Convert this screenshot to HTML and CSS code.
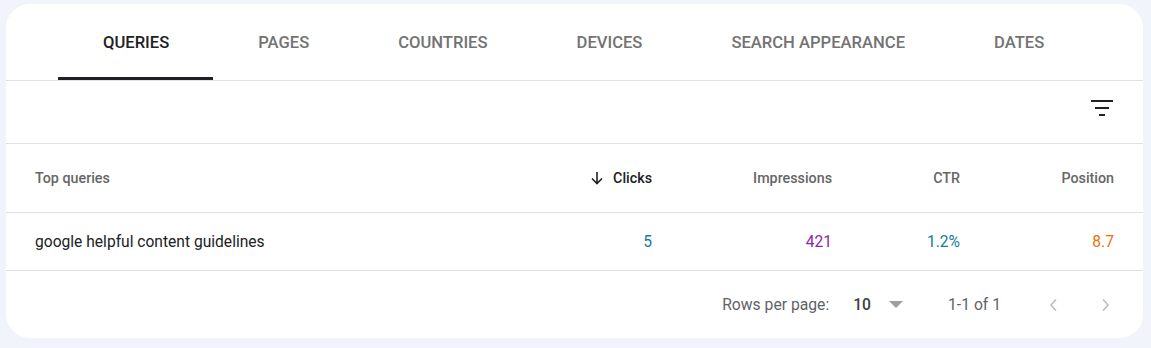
FILE: index.html
```html
<!DOCTYPE html>
<html>
<head>
<meta charset="utf-8">
<link rel="stylesheet" href="styles.css">
</head>
<body>
<div class="card">
  <div class="tabs">
    <div class="tab active">Queries</div>
    <div class="tab">Pages</div>
    <div class="tab">Countries</div>
    <div class="tab">Devices</div>
    <div class="tab">Search appearance</div>
    <div class="tab">Dates</div>
  </div>
  <div class="toolbar">
    <svg class="filter" width="22" height="16" viewBox="0 0 22 16"><rect x="0" y="0" width="22" height="2" fill="#202124"/><rect x="4" y="7" width="14" height="2" fill="#202124"/><rect x="8" y="14" width="6" height="2" fill="#202124"/></svg>
  </div>
  <div class="row head">
    <div class="c-q">Top queries</div>
    <div class="c-clicks sorted"><svg width="14" height="14" viewBox="0 0 14 14"><path d="M7 1v11M2 7.5l5 5 5-5" fill="none" stroke="#202124" stroke-width="1.6"/></svg>Clicks</div>
    <div class="c-imp">Impressions</div>
    <div class="c-ctr">CTR</div>
    <div class="c-pos">Position</div>
  </div>
  <div class="row data">
    <div class="c-q">google helpful content guidelines</div>
    <div class="c-clicks blue">5</div>
    <div class="c-imp purple">421</div>
    <div class="c-ctr blue">1.2%</div>
    <div class="c-pos orange">8.7</div>
  </div>
  <div class="footer">
    <span class="rpp">Rows per page:</span>
    <span class="rows">10</span>
    <svg class="caret" width="14" height="7" viewBox="0 0 14 7"><path d="M0 0h14L7 7z" fill="#9aa0a6"/></svg>
    <span class="range">1-1 of 1</span>
    <svg class="chev" width="10" height="14" viewBox="0 0 10 14"><path d="M8 1.5L3 7l5 5.5" fill="none" stroke="#bdbdbd" stroke-width="1.6"/></svg>
    <svg class="chev next" width="10" height="14" viewBox="0 0 10 14"><path d="M2 1.5L7 7l-5 5.5" fill="none" stroke="#bdbdbd" stroke-width="1.6"/></svg>
  </div>
</div>
</body>
</html>
```
FILE: styles.css
```css
html, body { margin: 0; padding: 0; }
body {
  background: #f1f4fb;
  font-family: Roboto, "Liberation Sans", Arial, sans-serif;
  padding: 4px 8px 10px 6px;
}
.card {
  background: #fff;
  border-radius: 24px;
  height: 334px;
  box-sizing: border-box;
  overflow: hidden;
}
.tabs {
  display: flex;
  padding-left: 52px;
  height: 76px;
  border-bottom: 1px solid #e0e0e0;
}
.tab {
  padding: 4px 44px 0 45px;
  font-size: 16.6px;
  font-weight: 500;
  text-transform: uppercase;
  color: #737373;
  display: flex;
  align-items: center;
  box-sizing: border-box;
  border-bottom: 3px solid transparent;
}
.tab.active { color: #202124; border-bottom-color: #202124; }
.toolbar {
  height: 62px;
  border-bottom: 1px solid #e0e0e0;
  display: flex;
  align-items: center;
  justify-content: flex-end;
  padding-right: 30px;
}
.toolbar .filter { margin-bottom: 8px; }
.row {
  display: grid;
  grid-template-columns: 1fr 160px 180px 128px 154px;
  padding: 0 29px;
  align-items: center;
  border-bottom: 1px solid #e0e0e0;
}
.row > div:not(.c-q) { text-align: right; justify-content: flex-end; }
.row.head { height: 68px; font-size: 14.3px; font-weight: 500; color: #666; }
.row.data { height: 57px; font-size: 15.6px; color: #202124; }
.sorted { color: #202124; display: flex; align-items: center; gap: 9px; }
.blue { color: #137b9c; }
.purple { color: #8e24aa; }
.orange { color: #e8710a; }
.footer {
  height: 67px;
  display: flex;
  align-items: center;
  justify-content: flex-end;
  padding-right: 32px;
  font-size: 15.7px;
  color: #5f6368;
}
.rows { margin-left: 24px; color: #3c4043; font-weight: 500; }
.caret { margin-left: 18px; }
.range { margin-left: 45px; }
.chev { margin-left: 47px; }
.chev.next { margin-left: 43px; }
```
